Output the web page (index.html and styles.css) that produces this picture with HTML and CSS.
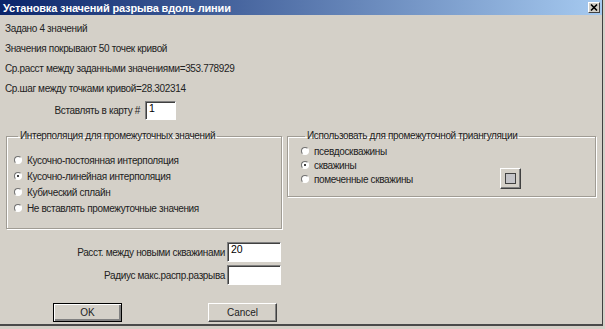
FILE: index.html
```html
<!DOCTYPE html>
<html lang="ru">
<head>
    <meta charset="UTF-8">
    <title>Установка значений разрыва вдоль линии</title>
    <link rel="stylesheet" href="styles.css">
</head>
<body>
    <div class="window">
        <div class="titlebar">
            <span class="title">Установка значений разрыва вдоль линии</span>
            <span class="close-btn">
                <svg width="8" height="7" viewBox="0 0 8 7">
                    <path d="M1 0.5 L7 6.5 M7 0.5 L1 6.5" stroke="#000" stroke-width="1.6"/>
                </svg>
            </span>
        </div>

        <div class="content">
            <div class="info-line">Задано 4 значений</div>
            <div class="info-line">Значения покрывают 50 точек кривой</div>
            <div class="info-line">Ср.расст между заданными значениями=353.778929</div>
            <div class="info-line">Ср.шаг между точками кривой=28.302314</div>

            <div class="map-row">
                <label class="map-label">Вставлять в карту #</label>
                <input class="edit map-edit" type="text" value="1">
            </div>

            <div class="groups">
                <fieldset class="group group-interp">
                    <legend>Интерполяция для промежуточных значений</legend>
                    <div class="radio-item"><span class="radio"></span>Кусочно-постоянная интерполяция</div>
                    <div class="radio-item"><span class="radio checked"></span>Кусочно-линейная интерполяция</div>
                    <div class="radio-item"><span class="radio"></span>Кубический сплайн</div>
                    <div class="radio-item"><span class="radio"></span>Не вставлять промежуточные значения</div>
                </fieldset>

                <fieldset class="group group-tri">
                    <legend>Использовать для промежуточной триангуляции</legend>
                    <div class="radio-item small"><span class="radio"></span>псевдоскважины</div>
                    <div class="radio-item small"><span class="radio checked"></span>скважины</div>
                    <div class="radio-item small">
                        <span class="radio"></span>помеченные скважины
                        <button class="pick-btn"><span class="pick-box"></span></button>
                    </div>
                </fieldset>
            </div>

            <div class="field-row first">
                <label class="field-label">Расст. между новыми скважинами</label>
                <input class="edit field-edit" type="text" value="20">
            </div>
            <div class="field-row">
                <label class="field-label">Радиус макс.распр.разрыва</label>
                <input class="edit field-edit" type="text" value="">
            </div>

            <div class="buttons">
                <button class="btn default">OK</button>
                <button class="btn">Cancel</button>
            </div>
        </div>
    </div>
</body>
</html>
```

FILE: styles.css
```css
body {
    margin: 0;
    background-color: #d4d0c8;
    font-family: "Liberation Sans", Arial, sans-serif;
    font-size: 10px;
    letter-spacing: -0.35px;
    color: #222;
}
.window {
    width: 603px;
    height: 326px;
    box-sizing: border-box;
    border-right: 1px solid #404040;
    border-bottom: 2px solid #4a4a4a;
    overflow: hidden;
}
.titlebar {
    height: 15px;
    display: flex;
    align-items: center;
    justify-content: space-between;
    padding: 0 2px 0 3px;
    background: linear-gradient(to right, #0a246a, #a6caf0);
}
.title {
    color: #fff;
    font-weight: bold;
    font-size: 11px;
    letter-spacing: -0.15px;
}
.close-btn {
    width: 12px;
    height: 11px;
    box-sizing: border-box;
    display: flex;
    align-items: center;
    justify-content: center;
    background-color: #d4d0c8;
    border: 1px solid;
    border-color: #fff #404040 #404040 #fff;
}
.content {
    padding: 4px 0 0 5px;
}
.info-line {
    height: 20px;
    line-height: 20px;
}
.map-row {
    display: flex;
    align-items: center;
    margin-top: 2px;
}
.map-label {
    width: 135px;
    text-align: right;
    margin-right: 5px;
}
.edit {
    box-sizing: border-box;
    background-color: #fff;
    border: 1px solid;
    border-color: #808080 #fff #fff #808080;
    box-shadow: inset 1px 1px 0 #404040;
    font-family: "Liberation Sans", Arial, sans-serif;
    font-size: 10.5px;
    padding: 0 0 6px 3px;
    color: #000;
    outline: none;
}
.map-edit {
    width: 31px;
    height: 19px;
}
.groups {
    display: flex;
    align-items: flex-start;
    gap: 5px;
    margin-top: 9px;
    margin-left: 1px;
}
.group {
    margin: 0;
    border: 1px solid #a09c94;
    box-shadow: inset 1px 1px 0 #fff, 1px 1px 0 #fff;
}
.group legend {
    padding: 0 2px;
    margin-left: 4px;
    line-height: 14px;
}
.group-interp {
    width: 276px;
    box-sizing: border-box;
    padding: 9px 0 12px 7px;
}
.group-tri {
    width: 309px;
    box-sizing: border-box;
    padding: 1px 0 10px 13px;
}
.radio-item {
    display: flex;
    align-items: center;
    height: 16px;
}
.radio-item.small {
    height: 14px;
}
.radio {
    width: 8px;
    height: 8px;
    box-sizing: border-box;
    border-radius: 50%;
    border: 1px solid;
    border-color: #707070 #fff #fff #707070;
    background-color: #fff;
    margin-right: 5px;
    display: flex;
    align-items: center;
    justify-content: center;
}
.radio.checked::after {
    content: "";
    width: 2px;
    height: 2px;
    border-radius: 50%;
    background-color: #000;
}
.pick-btn {
    width: 21px;
    height: 21px;
    margin: -4px 74px -3px auto;
    padding: 0;
    box-sizing: border-box;
    background-color: #d4d0c8;
    border: 1px solid;
    border-color: #fff #404040 #404040 #fff;
    box-shadow: inset -1px -1px 0 #808080;
    display: flex;
    align-items: center;
    justify-content: center;
}
.pick-box {
    width: 11px;
    height: 11px;
    box-sizing: border-box;
    border: 1px solid #404040;
    background-color: #c4c4c8;
}
.field-row {
    display: flex;
    align-items: center;
    margin-top: 3px;
}
.field-row.first {
    margin-top: 13px;
}
.field-label {
    width: 220px;
    text-align: right;
    margin-right: 2px;
}
.field-edit {
    width: 54px;
    height: 20px;
}
.buttons {
    display: flex;
    gap: 86px;
    margin: 18px 0 0 48px;
}
.btn {
    width: 69px;
    height: 19px;
    box-sizing: border-box;
    padding: 0;
    font-family: "Liberation Sans", Arial, sans-serif;
    font-size: 10px;
    color: #222;
    background-color: #d4d0c8;
    border: 1px solid;
    border-color: #fff #404040 #404040 #fff;
    box-shadow: inset -1px -1px 0 #808080;
}
.btn.default {
    border: 1px solid #000;
    box-shadow: inset 1px 1px 0 #fff, inset -2px -2px 0 #808080;
}
```
